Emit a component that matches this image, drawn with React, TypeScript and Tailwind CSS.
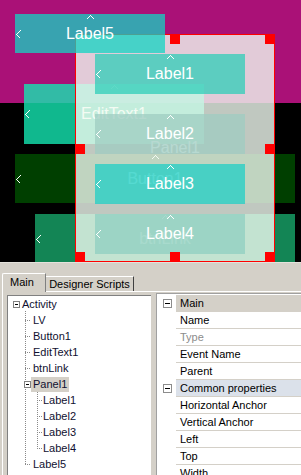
import React from 'react';

const UpMark = () => (
  <svg width="9" height="5" className="absolute left-[calc(50%-4px)] top-px">
    <polyline points="0.5,4.5 4.5,0.5 8.5,4.5" fill="none" stroke="white" strokeWidth="1" shapeRendering="crispEdges" />
  </svg>
);

const LeftMark = () => (
  <svg width="5" height="9" className="absolute left-px top-[calc(50%-4px)]">
    <polyline points="4.5,0.5 0.5,4.5 4.5,8.5" fill="none" stroke="white" strokeWidth="1" shapeRendering="crispEdges" />
  </svg>
);

function View({ className, text }: { className: string; text?: string }) {
  return (
    <div className={`absolute flex items-center justify-center text-white text-[16px] ${className}`}>
      <UpMark />
      <LeftMark />
      {text && <span className="leading-none">{text}</span>}
    </div>
  );
}

function Designer() {
  return (
    <div className="relative h-[262px] w-[301px] overflow-hidden bg-black font-['Liberation_Sans',Arial,sans-serif]">
      {/* LV */}
      <div className="absolute left-0 top-0 h-[103px] w-[301px] bg-[#aa1177]" />
      <View className="left-[15px] top-[154px] h-[49px] w-[280px] bg-[#004f00cc]" text="Button1" />
      <View className="left-[24px] top-[84px] h-[60px] w-[180px] bg-[#14e6b2cc]" text="EditText1" />
      <View className="left-[35px] top-[214px] h-[49px] w-[260px] bg-[#18a66acc]" text="btnLink" />

      {/* Panel1 */}
      <div className="absolute left-[75px] top-[34px] flex h-[228px] w-[200px] items-center justify-center bg-[#f0faf0cc] text-[16px] text-white">
        <span className="leading-none">Panel1</span>
      </div>
      <View className="left-[95px] top-[54px] h-[40px] w-[150px] bg-[#2fcdb8bf]" text="Label1" />
      <View className="left-[95px] top-[114px] h-[40px] w-[150px] bg-[#9fccc1bf]" text="Label2" />
      <View className="left-[95px] top-[164px] h-[40px] w-[150px] bg-[#20cfc5bf]" text="Label3" />
      <View className="left-[95px] top-[214px] h-[40px] w-[150px] bg-[#8fcfc0bf]" text="Label4" />

      {/* selection frame */}
      <div className="absolute left-[75px] top-[34px] h-[228px] w-[200px] border border-[#ff0000]">
        <div className="absolute left-[94px] top-[-1px] h-[10px] w-[10px] bg-[#ff0000]" />
        <div className="absolute left-[189px] top-[-1px] h-[10px] w-[10px] bg-[#ff0000]" />
        <div className="absolute left-[-1px] top-[109px] h-[10px] w-[10px] bg-[#ff0000]" />
        <div className="absolute left-[189px] top-[109px] h-[10px] w-[10px] bg-[#ff0000]" />
        <div className="absolute left-[-1px] top-[217px] h-[10px] w-[10px] bg-[#ff0000]" />
        <div className="absolute left-[94px] top-[217px] h-[10px] w-[10px] bg-[#ff0000]" />
        <div className="absolute left-[189px] top-[217px] h-[10px] w-[10px] bg-[#ff0000]" />
      </div>

      <View className="left-[15px] top-[14px] h-[39px] w-[150px] bg-[#12d4c3bf]" text="Label5" />
    </div>
  );
}

const Expander = () => (
  <span className="flex h-[7px] w-[7px] shrink-0 items-center justify-center border border-[#808080] bg-white">
    <span className="h-px w-[3px] bg-black" />
  </span>
);

function Tree() {
  const rows: { label: string; pad: string; kind?: 'root' | 'panel' }[] = [
    { label: 'Activity', pad: 'pl-[5px]', kind: 'root' },
    { label: 'LV', pad: 'pl-[25px]' },
    { label: 'Button1', pad: 'pl-[25px]' },
    { label: 'EditText1', pad: 'pl-[25px]' },
    { label: 'btnLink', pad: 'pl-[25px]' },
    { label: 'Panel1', pad: 'pl-[16px]', kind: 'panel' },
    { label: 'Label1', pad: 'pl-[35px]' },
    { label: 'Label2', pad: 'pl-[35px]' },
    { label: 'Label3', pad: 'pl-[35px]' },
    { label: 'Label4', pad: 'pl-[35px]' },
    { label: 'Label5', pad: 'pl-[25px]' },
  ];
  return (
    <div className="relative ml-[4px] mt-[3px] h-[190px] w-[144px] shrink-0 border-l border-t border-[#808080] bg-white text-[#101030]">
      <svg width="60" height="180" className="absolute left-0 top-0" shapeRendering="crispEdges">
        <g stroke="#8a8a8a" strokeWidth="1" strokeDasharray="1 1" fill="none">
          <line x1="17.5" y1="15" x2="17.5" y2="168" />
          {[24, 40, 56, 72, 168].map((y) => (
            <line key={y} x1="17" y1={y + 0.5} x2="23" y2={y + 0.5} />
          ))}
          <line x1="29.5" y1="94" x2="29.5" y2="152" />
          {[104, 120, 136, 152].map((y) => (
            <line key={y} x1="29" y1={y + 0.5} x2="35" y2={y + 0.5} />
          ))}
        </g>
      </svg>
      {rows.map((r) => (
        <div key={r.label} className={`relative flex h-[16px] items-center ${r.pad}`}>
          {r.kind === 'root' && (
            <>
              <Expander />
              <span className="ml-[2px]">{r.label}</span>
            </>
          )}
          {r.kind === 'panel' && (
            <>
              <Expander />
              <span className="flex h-[15px] items-center bg-[#d4d0c8] px-[2px]">{r.label}</span>
            </>
          )}
          {!r.kind && <span>{r.label}</span>}
        </div>
      ))}
    </div>
  );
}

function PropGrid() {
  const rows: { label: string; cat?: string; gray?: boolean }[] = [
    { label: 'Main', cat: 'bg-[#d4d0c8]' },
    { label: 'Name' },
    { label: 'Type', gray: true },
    { label: 'Event Name' },
    { label: 'Parent' },
    { label: 'Common properties', cat: 'bg-[#dbe1ea]' },
    { label: 'Horizontal Anchor' },
    { label: 'Vertical Anchor' },
    { label: 'Left' },
    { label: 'Top' },
    { label: 'Width' },
  ];
  return (
    <div className="ml-[5px] mt-[1px] h-[190px] flex-1 border-l border-t border-[#a0a0a0] bg-white pt-px">
      {rows.map((r) => (
        <div key={r.label} className="flex h-[17px]">
          <div className="flex w-[19px] shrink-0 items-center pl-[6px]">
            {r.cat && (
              <span className="flex h-[9px] w-[9px] items-center justify-center border border-[#8c8c8c] bg-white">
                <span className="h-px w-[5px] bg-black" />
              </span>
            )}
          </div>
          <div
            className={`flex flex-1 items-center whitespace-nowrap border-b border-[#d4d0c8] pl-[4px] ${r.cat ?? ''} ${
              r.gray ? 'text-[#8c8c8c]' : 'text-black'
            }`}
          >
            {r.label}
          </div>
        </div>
      ))}
    </div>
  );
}

export default function App() {
  return (
    <div className="h-[475px] w-[301px] overflow-hidden bg-[#d4d0c8]">
      <Designer />
      <div className="h-px bg-[#e4e2dc]" />
      <div className="font-['Liberation_Sans',Arial,sans-serif] text-[11px] leading-none">
        {/* tab strip */}
        <div className="flex h-[28px] items-end pl-[2px]">
          <div className="relative z-10 -mb-px flex h-[19px] w-[44px] items-center rounded-tl-[2px] border-l border-r border-t border-white border-r-[#808080] bg-[#d4d0c8] pb-px pl-[7px] text-black">
            Main
          </div>
          <div className="flex h-[15px] w-[88px] items-center justify-center border-r border-t border-white border-r-[#404040] text-black">
            Designer Scripts
          </div>
        </div>
        {/* tab page */}
        <div className="ml-[2px] flex h-[200px] items-start border-l border-t border-white">
          <Tree />
          <PropGrid />
        </div>
      </div>
    </div>
  );
}
